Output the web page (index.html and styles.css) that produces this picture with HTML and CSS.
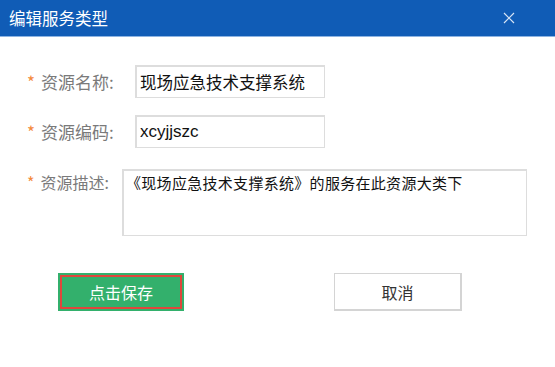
FILE: index.html
```html
<!DOCTYPE html>
<html>
<head>
<meta charset="utf-8">
<title>编辑服务类型</title>
<link rel="stylesheet" href="styles.css">
</head>
<body>

<div class="dialog">
	<div class="dialog-head">
		<span class="dialog-title">编辑服务类型</span>
		<svg class="dialog-close" width="12" height="12" viewBox="0 0 12 12"><path d="M1 1L11 11M11 1L1 11" stroke="#d7e4f5" stroke-width="1.2" fill="none"/></svg>
	</div>

	<div class="form">
		<div class="row">
			<label class="label"><i class="star">*</i>资源名称:</label>
			<input class="field" type="text" value="现场应急技术支撑系统">
		</div>
		<div class="row">
			<label class="label"><i class="star">*</i>资源编码:</label>
			<input class="field field-code" type="text" value="xcyjjszc">
		</div>
		<div class="row row-desc">
			<label class="label"><i class="star">*</i>资源描述:</label>
			<textarea class="area">《现场应急技术支撑系统》的服务在此资源大类下</textarea>
		</div>

		<div class="actions">
			<button class="btn btn-save"><span>点击保存</span></button>
			<button class="btn btn-cancel">取消</button>
		</div>
	</div>
</div>

</body>
</html>
```

FILE: styles.css
```css
html,body{
	margin:0;
	padding:0;
	background:#fff;
}
body{
	font-family:"Noto Sans CJK SC","Liberation Sans",sans-serif;
	width:555px;
	height:367px;
	overflow:hidden;
}
.dialog-head{
	height:36px;
	background:#105cb6;
	border-bottom:1px solid #8db4e2;
	display:flex;
	align-items:center;
	justify-content:space-between;
	padding:0 40px 0 9px;
}
.dialog-title{
	color:#fff;
	font-size:16.5px;
	line-height:36px;
}
.dialog-close{
	display:block;
}
.form{
	padding:28px 0 0 27px;
}
.row{
	display:flex;
	align-items:center;
	margin-bottom:17px;
}
.label{
	width:108px;
	font-size:17px;
	color:#7a7a7a;
	white-space:nowrap;
}
.star{
	font-style:normal;
	color:#f48a3c;
	margin-right:6px;
}
.field{
	box-sizing:border-box;
	width:190px;
	height:33px;
	border:1px solid #ddd;
	border-width:2px 1px 1px 2px;
	padding:0 0 0 3px;
	margin:0;
	font-family:"Noto Sans CJK SC","Liberation Sans",sans-serif;
	font-size:16.5px;
	color:#111;
	outline:none;
}
.field-code{
	font-family:"Liberation Sans","Noto Sans CJK SC",sans-serif;
	font-size:17px;
}
.row-desc{
	align-items:flex-start;
	margin-top:21px;
}
.row-desc .label{
	width:95px;
	font-size:16px;
	margin-top:1px;
}
.area{
	box-sizing:border-box;
	width:405px;
	height:67px;
	border:1px solid #ddd;
	border-width:2px 1px 1px 2px;
	padding:2px 2px;
	margin:0;
	resize:none;
	font-family:"Noto Sans CJK SC",sans-serif;
	font-size:15px;
	line-height:20px;
	color:#111;
	letter-spacing:0.3px;
	outline:none;
}
.actions{
	display:flex;
	margin-top:37px;
	padding-left:31px;
}
.btn{
	box-sizing:border-box;
	height:38px;
	margin:0;
	font-family:"Noto Sans CJK SC",sans-serif;
	font-size:16px;
	cursor:pointer;
}
.btn-save{
	width:126px;
	background:#33b06c;
	border:2px solid #33b06c;
	padding:0;
}
.btn-save span{
	display:flex;
	align-items:center;
	justify-content:center;
	height:100%;
	box-sizing:border-box;
	border:2px solid #e0463c;
	color:#fff;
}
.btn-cancel{
	width:128px;
	margin-left:150px;
	background:#fff;
	border:2px solid #d4d4d4;
	border-width:1px 2px 2px 1px;
	color:#333;
}
```
